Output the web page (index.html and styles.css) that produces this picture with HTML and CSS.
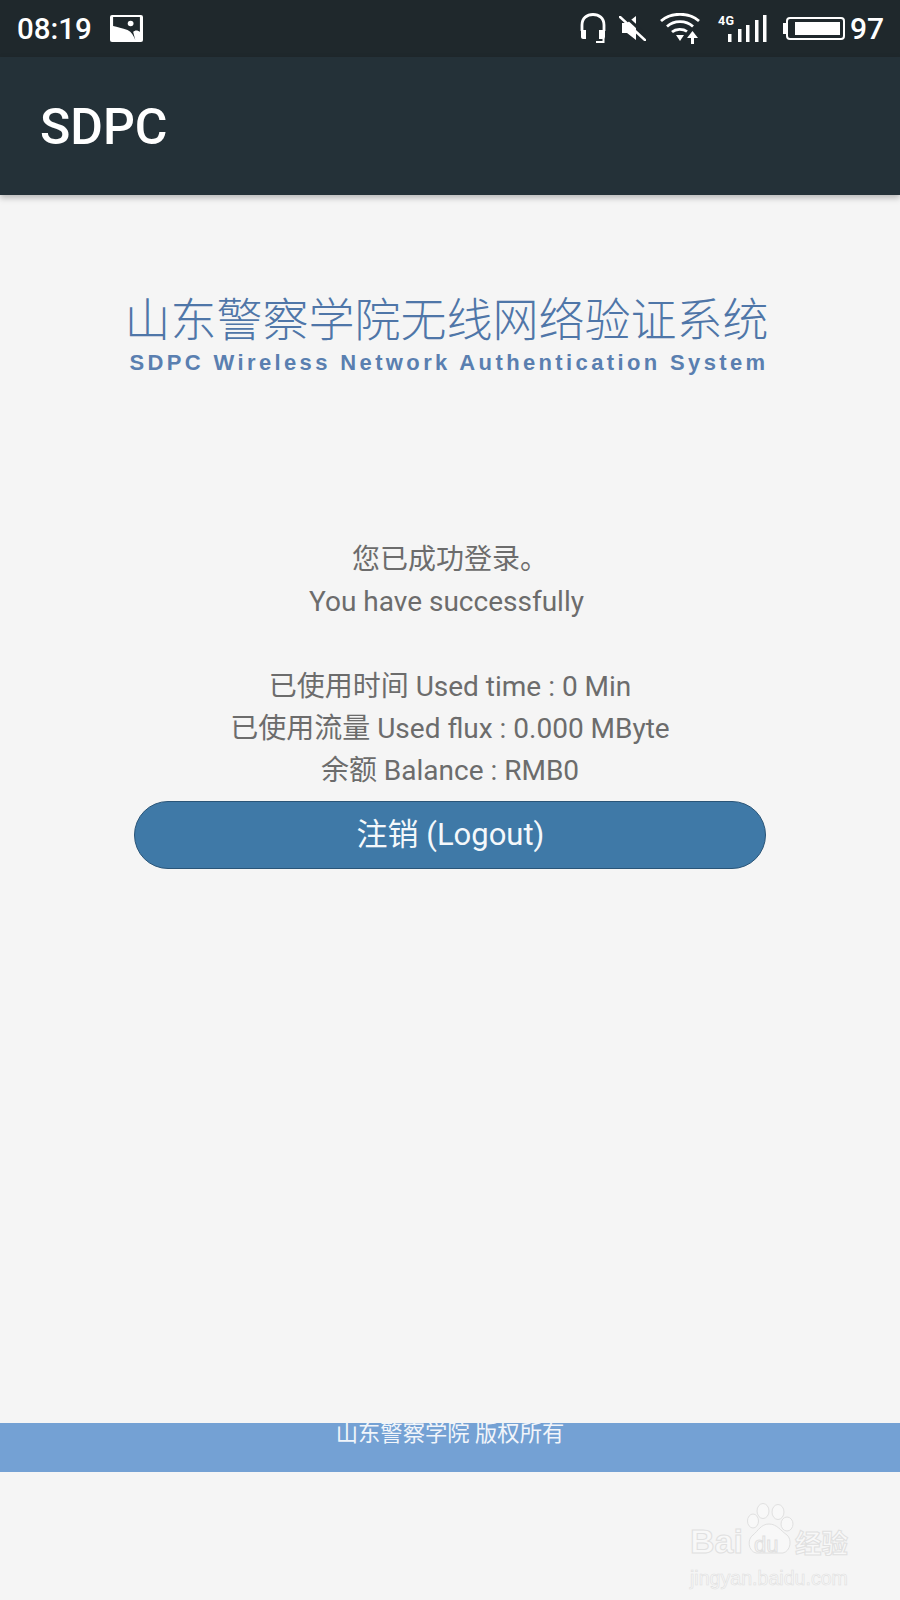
FILE: index.html
```html
<!DOCTYPE html>
<html lang="zh-CN">
<head>
    <meta charset="UTF-8">
    <meta name="viewport" content="width=device-width, initial-scale=1.0">
    <title>SDPC</title>
    <link rel="stylesheet" href="styles.css">
</head>
<body>
    <div class="status-bar">
        <div class="status-left">
            <span class="clock">08:19</span>
            <svg width="33" height="27" viewBox="0 0 32 27" preserveAspectRatio="none">
                <rect width="32" height="27" rx="2" fill="#fff"/>
                <path d="M3 2H29V17C27 15 24 15 22.5 17L24.5 25C23 21 21 17 17 15C12 13 7 12 3 11Z" fill="#1f282c"/>
                <circle cx="20" cy="8.5" r="2.8" fill="#fff"/>
            </svg>
        </div>
        <div class="status-right">
            <svg class="icon-headset" width="27" height="31" viewBox="0 0 27 31" fill="none" stroke="#fff" stroke-width="2.8">
                <path d="M2 18V12C2 5 7 1.5 13 1.5C19 1.5 24 5 24 12V18"/>
                <path d="M1 17H6V26H3C2 26 1 25 1 24Z" fill="#fff" stroke="none"/>
                <path d="M25 17H19V26H22C24 26 25 25 25 24Z" fill="#fff" stroke="none"/>
                <path d="M23.5 25V29H16" stroke-width="2"/>
            </svg>
            <svg class="icon-mute" width="27" height="25" viewBox="0 0 27 25">
                <path d="M3 7H8L17 0V24L8 17H3Z" fill="#fff"/>
                <path d="M4 -2L29 21" stroke="#1f282c" stroke-width="3"/>
                <path d="M0 0L27 25" stroke="#fff" stroke-width="2.6"/>
            </svg>
            <svg class="icon-wifi" width="40" height="31" viewBox="0 0 40 31" fill="none" stroke="#fff" stroke-width="2.8">
                <path d="M1 8C11 -1 29 -1 39 8"/>
                <path d="M7 13.5C14 7 26 7 33 13.5"/>
                <path d="M12 19C16 15.5 23 15.5 27 18.5"/>
                <path d="M16 22H24L20 28Z" fill="#fff" stroke="none"/>
                <path d="M32.5 31V22" stroke-width="3"/>
                <path d="M27 25L32.5 18L38 25Z" fill="#fff" stroke="none"/>
            </svg>
            <div class="signal">
                <span class="net-label">4G</span>
                <svg width="49" height="27" viewBox="0 0 49 27" fill="#fff">
                    <rect x="10" y="19" width="3.5" height="8"/>
                    <rect x="20" y="14" width="3.5" height="13"/>
                    <rect x="28" y="10" width="3.5" height="17"/>
                    <rect x="37" y="5" width="3.5" height="22"/>
                    <rect x="45" y="0" width="3.5" height="27"/>
                </svg>
            </div>
            <div class="battery">
                <span class="battery-cap"></span>
                <span class="battery-body"><span class="battery-fill"></span></span>
            </div>
            <span class="battery-num">97</span>
        </div>
    </div>

    <header class="app-bar">SDPC</header>

    <main class="content">
        <div class="logo">
            <div class="logo-cn">山东警察学院无线网络验证系统</div>
            <div class="logo-en">SDPC Wireless Network Authentication System</div>
        </div>

        <div class="info">
            <p>您已成功登录。</p>
            <p>You have successfully&nbsp;</p>
            <p>&nbsp;</p>
            <p>已使用时间 Used time : 0 Min</p>
            <p>已使用流量 Used flux : 0.000 MByte</p>
            <p>余额 Balance : RMB0</p>
        </div>

        <button class="logout" type="button">注销 (Logout)</button>
    </main>

    <footer class="copyright">山东警察学院 版权所有</footer>
    <div class="bottom-space"></div>

    <!-- Baidu watermark -->
    <div class="watermark">
        <svg class="paw" width="47" height="52" viewBox="0 0 47 52" fill="#f8f8f8" stroke="#e0e0e0" stroke-width="1">
            <ellipse cx="6" cy="18" rx="5.5" ry="7"/>
            <ellipse cx="16" cy="8" rx="6" ry="7.5"/>
            <ellipse cx="31" cy="9" rx="6" ry="7.5"/>
            <ellipse cx="40" cy="21" rx="6" ry="7"/>
            <path d="M22 21C30 21 34 28 40 32C45 36 44 48 36 50H9C1 48 0 36 6 32C11 28 14 21 22 21Z"/>
        </svg>
        <div class="wm-row"><span class="wm-bai">Bai</span><span class="wm-du">du</span><span class="wm-jy">经验</span></div>
        <div class="wm-url">jingyan.baidu.com</div>
    </div>
</body>
</html>
```

FILE: styles.css
```css
* { margin: 0; padding: 0; box-sizing: border-box; }
body { position: relative; width: 900px; height: 1600px; overflow: hidden; display: flex; flex-direction: column; background-color: #f5f5f5; font-family: Roboto, "Noto Sans CJK SC", sans-serif; color: #6c6c6c; }

.status-bar { height: 57px; flex: none; display: flex; justify-content: space-between; align-items: center; padding: 0 16px 0 17px; background-color: #1f282c; color: #fff; }
.status-left { display: flex; align-items: center; gap: 18px; }
.clock { font-size: 29.5px; font-weight: 500; }
.status-right { display: flex; align-items: center; }
.icon-headset { margin-right: 12px; }
.icon-mute { margin-right: 14px; }
.icon-wifi { margin-right: 18px; }
.signal { position: relative; width: 49px; margin-right: 16px; display: flex; }
.net-label { position: absolute; left: 0; top: 1px; font-size: 12.5px; line-height: 10px; font-weight: 700; letter-spacing: 0.5px; color: #fff; }
.battery { display: flex; align-items: center; margin-right: 5px; }
.battery-cap { width: 3px; height: 11px; background-color: #fff; }
.battery-body { width: 59px; height: 23px; border: 2px solid #fff; border-radius: 4px; padding: 3px 3px 3px 7px; display: block; }
.battery-fill { display: block; height: 100%; background-color: #fff; }
.battery-num { font-size: 30px; font-weight: 500; }

.app-bar { height: 138px; flex: none; position: relative; display: flex; align-items: center; padding: 1px 0 0 40px; background-color: #243138; color: #fff; font-size: 50px; font-weight: 500; box-shadow: 0 3px 6px rgba(0, 0, 0, 0.25); }

.content { flex: 1; display: flex; flex-direction: column; align-items: center; }
.logo { margin-top: 100px; margin-left: -7px; text-align: center; color: #4f76a8; }
.logo-cn { font-size: 46px; line-height: 42px; white-space: nowrap; font-family: "Noto Sans CJK SC", sans-serif; font-weight: 300; }
.logo-en { margin-top: 13px; padding-left: 5px; font-family: "Liberation Sans", Arial, sans-serif; font-size: 22px; line-height: 26px; font-weight: 700; letter-spacing: 3.37px; white-space: nowrap; color: #5a7fb0; }

.info { margin-top: 163px; text-align: center; font-size: 28px; line-height: 42.2px; }
.logout { width: 632px; height: 68px; margin-top: 9px; margin-left: -1px; padding: 0 0 8px 2px; border: 1px solid #2a5578; border-radius: 34px; background-color: #3f79a7; color: #f4f8fb; font-family: inherit; font-size: 31px; }

.copyright { height: 49px; flex: none; background-color: #74a1d4; color: #f1f5fa; text-align: center; font-size: 22.3px; line-height: 20px; }
.bottom-space { height: 128px; flex: none; }

.watermark { position: absolute; left: 690px; top: 1503px; width: 167px; color: #f8f8f8; }
.paw { position: absolute; left: 57px; top: 0; }
.wm-row { position: relative; margin-top: 21px; height: 34px; display: flex; align-items: center; font-family: "Liberation Sans", Arial, sans-serif; font-size: 34px; font-weight: 700; -webkit-text-stroke: 1px #e0e0e0; }
.wm-du { margin-left: 11px; width: 41px; padding-top: 8px; font-size: 22px; font-weight: 400; }
.wm-jy { font-family: "Noto Sans CJK SC", sans-serif; font-size: 26.5px; }
.wm-url { margin-top: 9px; font-family: "Liberation Sans", Arial, sans-serif; font-size: 19.6px; -webkit-text-stroke: 0.6px #e0e0e0; white-space: nowrap; }
```
